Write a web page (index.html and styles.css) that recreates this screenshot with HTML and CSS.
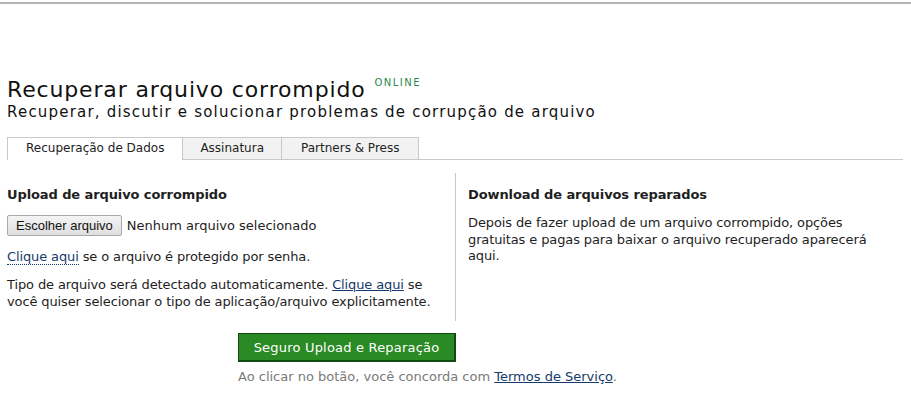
FILE: index.html
```html
<!DOCTYPE html>
<html lang="pt">
<head>
  <meta charset="UTF-8">
  <title>Recuperar arquivo corrompido</title>
  <link rel="stylesheet" href="styles.css">
</head>
<body>
  <div class="topline"></div>

  <div class="page">
    <h1 class="title">Recuperar arquivo corrompido <sup class="online">ONLINE</sup></h1>
    <div class="subtitle">Recuperar, discutir e solucionar problemas de corrupção de arquivo</div>

    <ul class="tabs">
      <li class="tab active">Recuperação de Dados</li>
      <li class="tab">Assinatura</li>
      <li class="tab last">Partners &amp; Press</li>
    </ul>

    <div class="columns">
      <div class="col left">
        <h3>Upload de arquivo corrompido</h3>
        <div class="file-row">
          <button class="file-btn">Escolher arquivo</button>
          <span>Nenhum arquivo selecionado</span>
        </div>
        <p><a class="dotted" href="#">Clique aqui</a> se o arquivo é protegido por senha.</p>
        <p>Tipo de arquivo será detectado automaticamente. <a href="#">Clique aqui</a> se você quiser selecionar o tipo de aplicação/arquivo explicitamente.</p>
      </div>
      <div class="col right">
        <h3>Download de arquivos reparados</h3>
        <p>Depois de fazer upload de um arquivo corrompido, opções gratuitas e pagas para baixar o arquivo recuperado aparecerá aqui.</p>
      </div>
    </div>

    <div class="submit">
      <button class="go">Seguro Upload e Reparação</button>
      <div class="terms">Ao clicar no botão, você concorda com <a href="#">Termos de Serviço</a>.</div>
    </div>
  </div>
</body>
</html>
```

FILE: styles.css
```css
body {
  margin: 0;
  font-family: Verdana, "DejaVu Sans", sans-serif;
  font-size: 13px;
  color: #1e1e1e;
  background: #fff;
}

.topline {
  margin-top: 2px;
  border-top: 2px solid #b5b5b5;
}

.page {
  padding: 0 8px 0 7px;
}

.title {
  margin: 67px 0 0 0;
  font-size: 22px;
  font-weight: normal;
  line-height: 24px;
  letter-spacing: 0.85px;
  color: #111;
}

.online {
  font-size: 10px;
  color: #2b8a4f;
  letter-spacing: 1.5px;
  vertical-align: 11px;
  margin-left: 1px;
}

.subtitle {
  font-size: 15px;
  letter-spacing: 1.2px;
  line-height: 20px;
  color: #111;
}

.tabs {
  list-style: none;
  margin: 15px 0 0 0;
  padding: 0;
  display: flex;
  border-bottom: 1px solid #c8c8c8;
}

.tab {
  font-size: 12px;
  color: #222;
  height: 21px;
  line-height: 21px;
  padding: 0 17px;
  background: #f2f2f2;
  border: 1px solid #c8c8c8;
  border-left: none;
  border-bottom: none;
  margin-bottom: -1px;
}

.tab.last {
  padding: 0 19px;
}

.tab.active {
  background: #fff;
  border-left: 1px solid #c8c8c8;
  padding: 0 18px;
  height: 22px;
}

.columns {
  display: flex;
  margin-top: 13px;
}

.col {
  padding-bottom: 11px;
}

.col.left {
  width: 448px;
  border-right: 1px solid #c8c8c8;
}

.col.right {
  padding-left: 12px;
  width: 420px;
}

h3 {
  font-size: 13px;
  margin: 14px 0 13px 0;
  letter-spacing: -0.1px;
}

p {
  margin: 0 0 11px 0;
  line-height: 17px;
  letter-spacing: -0.12px;
}

p:last-child {
  margin-bottom: 0;
}

.col.right p {
  line-height: 16.5px;
}

.file-row {
  display: flex;
  align-items: center;
  gap: 5px;
  margin-bottom: 12px;
}

.file-btn {
  font-family: "Liberation Sans", Arial, sans-serif;
  font-size: 13px;
  color: #111;
  height: 21px;
  padding: 0 8px;
  background: linear-gradient(#f4f4f4, #dedede);
  border: 1px solid #a9a9a9;
  border-radius: 2px;
}

a {
  color: #163a6b;
}

a.dotted {
  text-decoration: none;
  border-bottom: 1px dotted #163a6b;
}

.submit {
  padding-left: 231px;
  margin-top: 12px;
}

.go {
  font-family: Verdana, "DejaVu Sans", sans-serif;
  font-size: 13px;
  letter-spacing: 0.2px;
  color: #fff;
  background: #2a8a24;
  border: 1px solid #124a12;
  border-right-width: 2px;
  border-bottom-width: 2px;
  height: 29px;
  width: 218px;
  padding: 0;
}

.terms {
  margin-top: 7px;
  color: #7a7a7a;
}
```
